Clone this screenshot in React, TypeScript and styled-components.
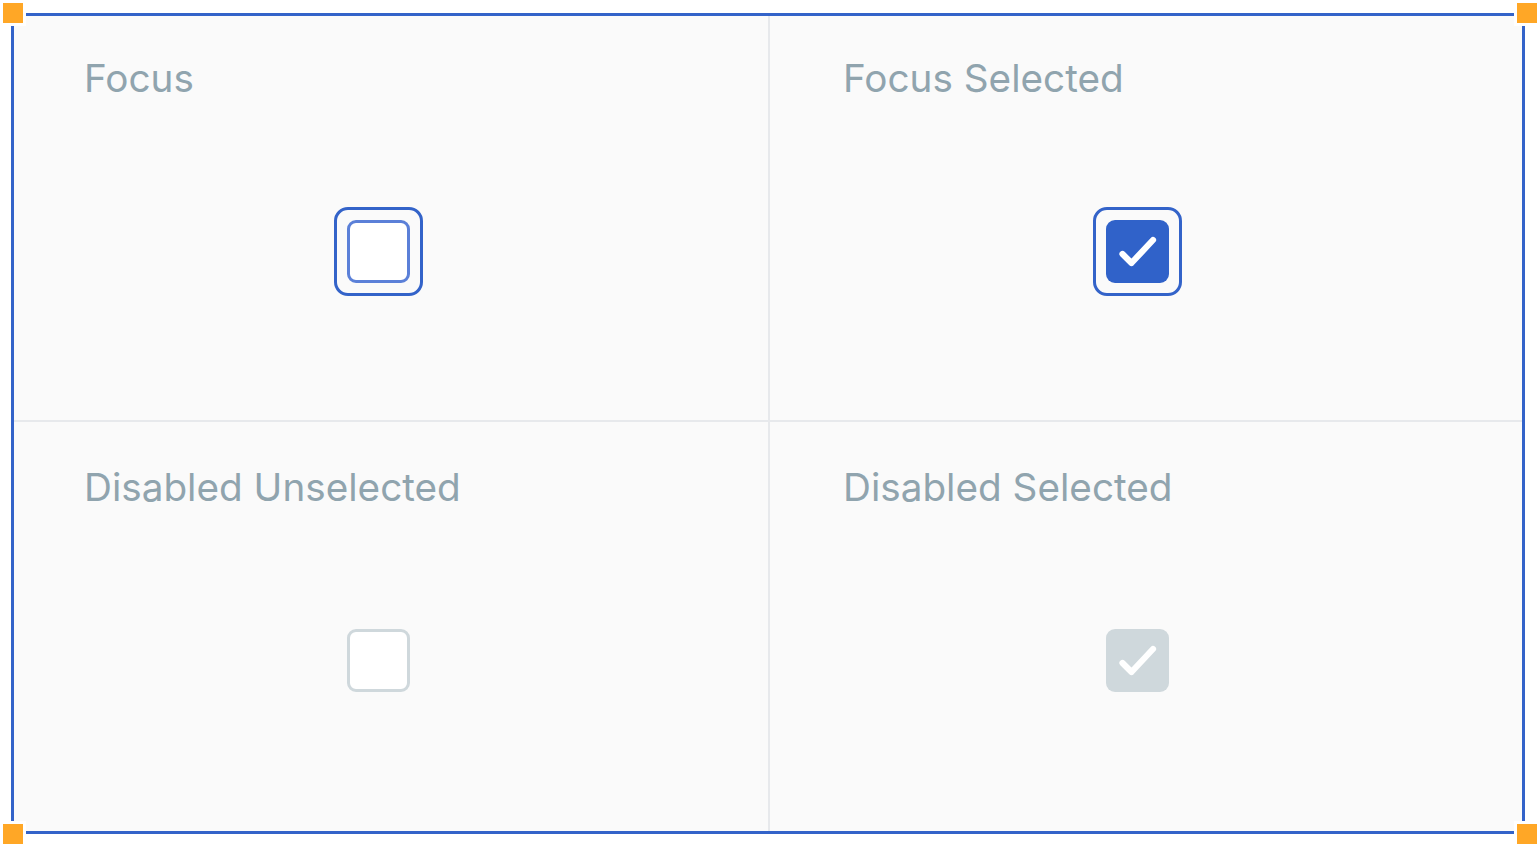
import React from "react";
import styled, { createGlobalStyle } from "styled-components";

const Global = createGlobalStyle`
  html, body { margin: 0; padding: 0; background: #ffffff; }
  body { font-family: Inter, "Noto Sans", sans-serif; }
`;

const Page = styled.div`
  width: 1540px;
  height: 847px;
  padding: 13px 0 0 11px;
  box-sizing: border-box;
  position: relative;
`;

const Frame = styled.div`
  width: 1514px;
  height: 821px;
  box-sizing: border-box;
  border: 3px solid #3363c9;
  display: grid;
  grid-template-columns: 754px 1fr;
  grid-template-rows: 404px 1fr;
  gap: 2px;
  background: #e7e9ec;
`;

const Handle = styled.div<{ $x: number; $y: number }>`
  position: absolute;
  left: ${(p) => p.$x}px;
  top: ${(p) => p.$y}px;
  width: 20px;
  height: 20px;
  background: #ffa726;
  box-shadow: 0 0 0 3px #ffffff;
`;

const Cell = styled.div<{ $shift: number; $top: number }>`
  background: #fafafa;
  display: flex;
  flex-direction: column;
  padding: ${(p) => p.$top}px 0 0 ${(p) => p.$shift}px;
  box-sizing: border-box;
`;

const Label = styled.div`
  font-family: Inter, "Noto Sans", sans-serif;
  font-size: 38.7px;
  line-height: normal;
  color: #90a4ae;
`;

const CheckArea = styled.div<{ $left: number; $top: number }>`
  display: flex;
  padding-left: ${(p) => p.$left}px;
  padding-top: ${(p) => p.$top}px;
`;

const Ring = styled.div<{ $focus: boolean }>`
  box-sizing: border-box;
  width: ${(p) => (p.$focus ? 89 : 63)}px;
  height: ${(p) => (p.$focus ? 89 : 63)}px;
  padding: ${(p) => (p.$focus ? 10 : 0)}px;
  border: ${(p) => (p.$focus ? "3px solid #3363c9" : "none")};
  border-radius: 14px;
  display: flex;
`;

type BoxKind = "focus" | "focusSelected" | "disabled" | "disabledSelected";

const Box = styled.div<{ $kind: BoxKind }>`
  box-sizing: border-box;
  width: 63px;
  height: 63px;
  border-radius: 9px;
  display: flex;
  align-items: center;
  justify-content: center;
  ${(p) =>
    p.$kind === "focus"
      ? "border: 3px solid #5b80d8; background: #ffffff;"
      : p.$kind === "focusSelected"
      ? "background: #3062c9;"
      : p.$kind === "disabled"
      ? "border: 3px solid #cfd8dc; background: #ffffff;"
      : "background: #cfd8dc;"}
`;

const Check = () => (
  <svg width="63" height="63" viewBox="0 0 63 63">
    <polyline
      points="16.5,34 25.5,43 47,20"
      fill="none"
      stroke="#ffffff"
      strokeWidth="6.2"
      strokeLinecap="round"
      strokeLinejoin="round"
    />
  </svg>
);

const CheckboxDemo = ({ kind }: { kind: BoxKind }) => {
  const focus = kind === "focus" || kind === "focusSelected";
  const selected = kind === "focusSelected" || kind === "disabledSelected";
  return (
    <Ring $focus={focus}>
      <Box $kind={kind}>{selected && <Check />}</Box>
    </Ring>
  );
};

const cells: { label: string; kind: BoxKind; shift: number; top: number; boxLeft: number; boxTop: number }[] = [
  { label: "Focus", kind: "focus", shift: 70, top: 39, boxLeft: 250, boxTop: 106 },
  { label: "Focus Selected", kind: "focusSelected", shift: 73, top: 39, boxLeft: 250, boxTop: 106 },
  { label: "Disabled Unselected", kind: "disabled", shift: 70, top: 42, boxLeft: 263, boxTop: 119 },
  { label: "Disabled Selected", kind: "disabledSelected", shift: 73, top: 42, boxLeft: 263, boxTop: 119 },
];

export default function App() {
  return (
    <>
      <Global />
      <Page>
        <Frame>
          {cells.map((c) => (
            <Cell key={c.label} $shift={c.shift} $top={c.top}>
              <Label>{c.label}</Label>
              <CheckArea $left={c.boxLeft} $top={c.boxTop}>
                <CheckboxDemo kind={c.kind} />
              </CheckArea>
            </Cell>
          ))}
        </Frame>
        <Handle $x={3} $y={3} />
        <Handle $x={1517} $y={3} />
        <Handle $x={3} $y={824} />
        <Handle $x={1517} $y={824} />
      </Page>
    </>
  );
}
